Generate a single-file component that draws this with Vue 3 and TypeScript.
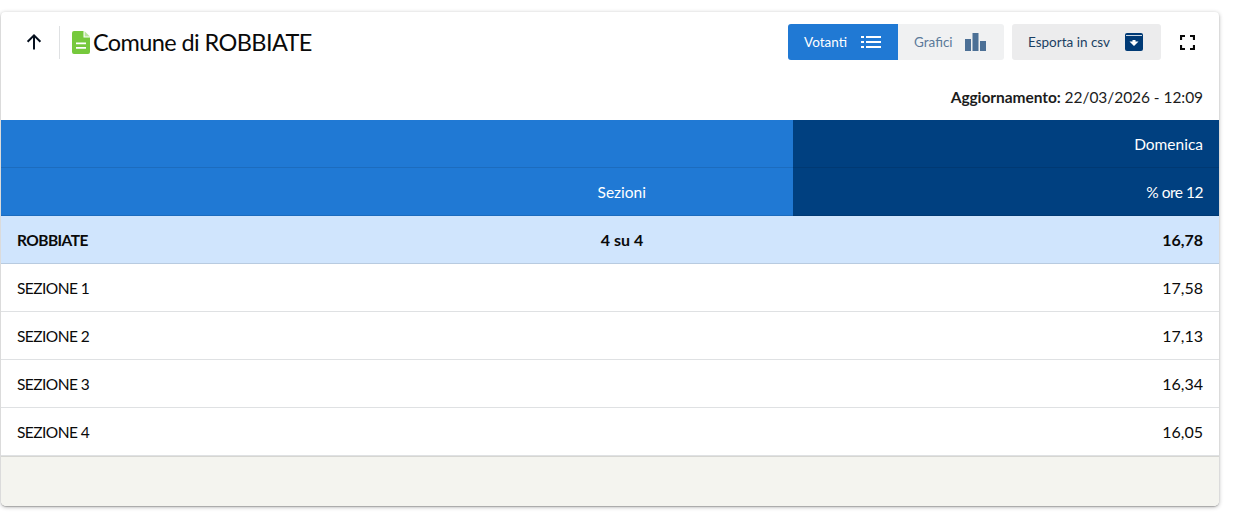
<template>
  <div class="page">
    <div class="card">
      <div class="toolbar">
        <div class="title-group">
          <button class="back" aria-label="Indietro">
            <svg width="18" height="18" viewBox="0 0 18 18"><path d="M9 16.500V2.600M2.600 8.800 9 2.400l6.400 6.400" fill="none" stroke="#06101e" stroke-width="2"/></svg>
          </button>
          <span class="sep"></span>
          <svg class="doc" width="18" height="23" viewBox="0 0 18 23">
            <path d="M2 0h9.500v6.500H18V21a2 2 0 0 1-2 2H2a2 2 0 0 1-2-2V2a2 2 0 0 1 2-2z" fill="#76c93c"/>
            <path d="M12.600 0.200 18 5.400h-5.400z" fill="#76c93c" opacity=".5"/>
            <path d="M4 11.500h10v1.800H4zM4 16h10v1.800H4z" fill="#fff"/>
          </svg>
          <h1>Comune di ROBBIATE</h1>
        </div>
        <div class="actions">
          <div class="switch">
            <span class="tab active">
              Votanti
              <svg width="20" height="12" viewBox="0 0 20 12" fill="#fff"><path d="M0 0h3v2H0zM5 0h15v2H5zM0 5h3v2H0zM5 5h15v2H5zM0 10h3v2H0zM5 10h15v2H5z"/></svg>
            </span>
            <span class="tab second">
              Grafici
              <svg width="21" height="18" viewBox="0 0 21 18" fill="#4c7096"><path d="M0 6h6v12H0zM7.500 0h6v18h-6zM15 8h6v10h-6z"/></svg>
            </span>
          </div>
          <span class="export">
            Esporta in csv
            <svg width="18" height="18" viewBox="0 0 18 18">
              <rect width="18" height="18" rx="2" fill="#003a75"/>
              <path d="M1 2.500h16" stroke="#fff" stroke-width=".8"/>
              <path d="M4.500 8.500h3V7h3v1.500h3L9 13z" fill="#fff"/>
            </svg>
          </span>
          <button class="full" aria-label="Schermo intero">
            <svg width="15" height="15" viewBox="0 0 15 15" fill="none" stroke="#0a0a0a" stroke-width="2.200"><path d="M1 5V1h4M10 1h4v4M14 10v4h-4M5 14H1v-4"/></svg>
          </button>
        </div>
      </div>
      <div class="updated"><b>Aggiornamento:</b> 22/03/2026 - 12:09</div>
      <div class="head">
        <div class="head-row">
          <div class="cell light"></div>
          <div class="cell dark">Domenica</div>
        </div>
        <div class="head-row">
          <div class="cell light sez">Sezioni</div>
          <div class="cell dark pct">% ore 12</div>
        </div>
      </div>
      <div class="row total">
        <span class="name">ROBBIATE</span>
        <span class="count">4 su 4</span>
        <span class="value">16,78</span>
      </div>
      <div v-for="r in rows" :key="r.name" class="row">
        <span class="name">{{ r.name }}</span>
        <span class="count"></span>
        <span class="value">{{ r.value }}</span>
      </div>
      <div class="foot"></div>
    </div>
  </div>
</template>

<script setup lang="ts">
interface Row {
  name: string
  value: string
}

const rows: Row[] = [
  { name: 'SEZIONE 1', value: '17,58' },
  { name: 'SEZIONE 2', value: '17,13' },
  { name: 'SEZIONE 3', value: '16,34' },
  { name: 'SEZIONE 4', value: '16,05' }
]
</script>

<style>
html, body {
  background: #fff;
}
</style>

<style scoped>
.page {
  width: 1234px;
  height: 525px;
  padding: 12px 15px 0 1px;
  box-sizing: border-box;
  font-family: Lato, "Open Sans", sans-serif;
  color: #0a0a0a;
}

.card {
  background: #fff;
  border-radius: 4px 4px 5px 5px;
  box-shadow: 0 1px 4px rgba(0, 0, 0, 0.3), 0 1px 1px rgba(0, 0, 0, 0.2);
  overflow: hidden;
}

.toolbar {
  display: flex;
  justify-content: space-between;
  align-items: center;
  height: 60px;
}

.title-group {
  display: flex;
  align-items: center;
}

.back {
  width: 58px;
  height: 33px;
  border: 0;
  background: none;
  padding: 0 0 0 8px;
  display: flex;
  align-items: center;
  justify-content: center;
}

.sep {
  width: 1px;
  height: 33px;
  background: #dfe1e3;
  margin-right: 12px;
}

.doc {
  margin-right: 3px;
}

h1 {
  margin: 0;
  font-size: 23.5px;
  font-weight: 400;
  line-height: 30px;
  letter-spacing: -0.6px;
}

.actions {
  display: flex;
  align-items: center;
}

.switch {
  display: flex;
  height: 36px;
  border-radius: 3px;
  overflow: hidden;
  background: #f0f1f2;
  margin-right: 8px;
}

.tab {
  display: flex;
  align-items: center;
  gap: 14px;
  width: 110px;
  box-sizing: border-box;
  padding-left: 16px;
  font-size: 13.5px;
  color: #5b7a9a;
}

.tab.second {
  width: 106px;
  gap: 12px;
}

.tab.active {
  background: #2079d4;
  color: #fff;
}

.export {
  display: flex;
  align-items: center;
  gap: 15px;
  width: 149px;
  box-sizing: border-box;
  height: 36px;
  padding-left: 16px;
  border-radius: 3px;
  background: #ececed;
  font-size: 13.5px;
  color: #1a3f63;
}

.full {
  width: 52px;
  height: 36px;
  margin-right: 6px;
  border: 0;
  background: none;
  display: flex;
  align-items: center;
  justify-content: center;
  padding: 0;
}

.updated {
  height: 48px;
  padding: 13px 16px 0 0;
  box-sizing: border-box;
  text-align: right;
  font-size: 15.5px;
  line-height: 24px;
  letter-spacing: -0.06px;
  color: #1c1c1c;
}

.head-row {
  display: flex;
  height: 48px;
  color: #fff;
  font-size: 15.5px;
}

.cell {
  display: flex;
  align-items: center;
  justify-content: flex-end;
  box-sizing: border-box;
  border-bottom: 1px solid rgba(0, 0, 0, 0.1);
}

.cell.light {
  width: 792px;
  background: #2079d4;
}

.cell.sez {
  padding-right: 147px;
}

.cell.dark {
  flex: 1;
  background: #004080;
  padding-right: 16px;
}

.cell.pct {
  letter-spacing: -0.5px;
}

.row {
  display: grid;
  grid-template-columns: 545px 120px 1fr;
  align-items: center;
  height: 48px;
  box-sizing: border-box;
  padding: 0 16px;
  border-bottom: 1px solid #dfe1e3;
  font-size: 16px;
}

.row.total {
  background: #d0e5fd;
  font-weight: 700;
  border-bottom-color: #b8cbe0;
}

.name {
  font-size: 15.5px;
  letter-spacing: -0.55px;
}

.count {
  text-align: center;
}

.value {
  text-align: right;
}

.foot {
  height: 50px;
  background: #f4f4ef;
  border-top: 1px solid #d6d6d2;
  box-sizing: border-box;
}
</style>
